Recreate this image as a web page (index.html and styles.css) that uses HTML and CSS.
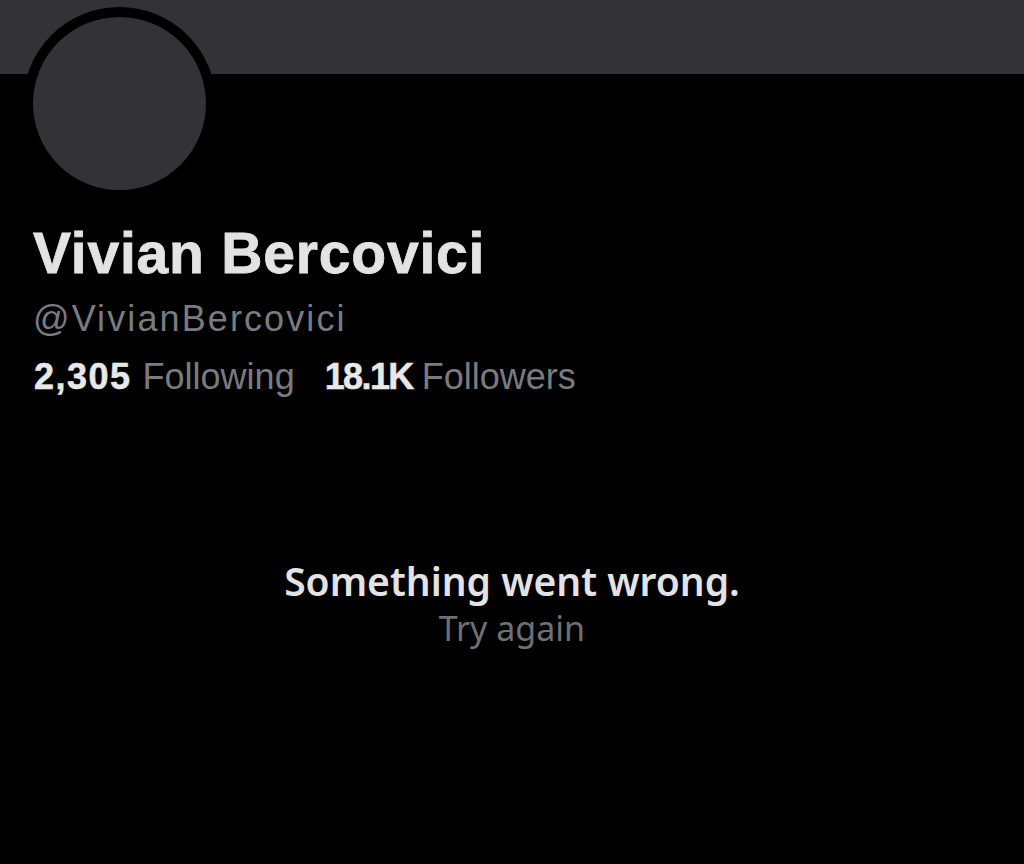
FILE: index.html
```html
<!DOCTYPE html>
<html lang="en">
<head>
<meta charset="utf-8">
<title>Vivian Bercovici</title>
<link rel="stylesheet" href="styles.css">
</head>
<body>
  <div class="banner"></div>
  <section class="profile">
    <div class="avatar"></div>
    <h1 class="name">Vivian Bercovici</h1>
    <div class="handle">@VivianBercovici</div>
    <div class="stats">
      <span class="stat"><b class="count">2,305</b><span class="label">Following</span></span>
      <span class="stat stat-tight"><b class="count count-tight">18.1K</b><span class="label">Followers</span></span>
    </div>
  </section>
  <section class="error">
    <div class="error-title">Something went wrong.</div>
    <div class="error-retry">Try again</div>
  </section>
</body>
</html>
```

FILE: styles.css
```css
html, body {
  margin: 0;
  padding: 0;
  background: #000;
  height: 100%;
}
body {
  font-family: "Liberation Sans", Arial, sans-serif;
  color: #e3e3e3;
  overflow: hidden;
}
.banner {
  height: 74px;
  background: #333337;
}
.profile {
  padding-left: 23px;
  display: flex;
  flex-direction: column;
  align-items: flex-start;
}
.avatar {
  width: 173px;
  height: 173px;
  border: 10px solid #000;
  border-radius: 50%;
  background: #333337;
  margin-top: -67px;
}
.name {
  margin: 19px 0 0 10px;
  font-size: 57px;
  font-weight: 700;
  line-height: 68px;
  letter-spacing: 0.8px;
  -webkit-text-stroke: 0.8px #e3e3e3;
  color: #e3e3e3;
}
.handle {
  margin: 10px 0 0 10px;
  font-size: 36px;
  line-height: 44px;
  letter-spacing: 2.1px;
  color: #7a7b7f;
}
.stats {
  margin: 15px 0 0 11px;
  display: flex;
  gap: 30px;
  font-size: 36px;
  line-height: 42px;
}
.stat {
  display: flex;
  gap: 11px;
}
.stat-tight {
  gap: 9px;
}
.count {
  font-weight: 700;
  color: #e8e8e8;
  letter-spacing: 1.5px;
  -webkit-text-stroke: 0.5px #e8e8e8;
}
.count-tight {
  letter-spacing: -1.6px;
}
.label {
  color: #7a7b7f;
}
.error {
  margin-top: 160px;
  display: flex;
  flex-direction: column;
  align-items: center;
  font-family: "Noto Sans", "Open Sans", sans-serif;
}
.error-title {
  font-size: 39px;
  font-weight: 600;
  line-height: 46px;
  color: #e3e3e3;
}
.error-retry {
  margin-top: 2px;
  font-size: 34px;
  line-height: 44px;
  color: #6f7074;
}
```
